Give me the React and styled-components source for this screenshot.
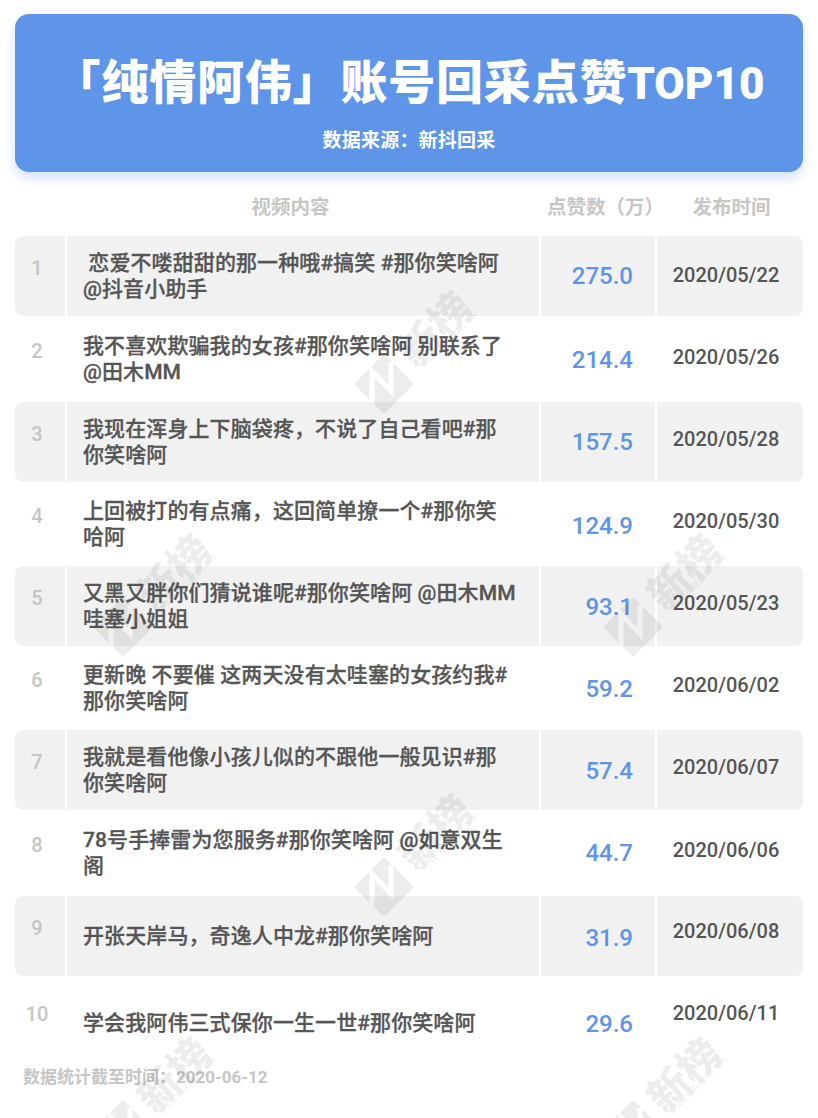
import React from "react";
import styled, { createGlobalStyle } from "styled-components";

const Global = createGlobalStyle`
  html, body { margin: 0; padding: 0; background: #fff; }
  body { font-family: "Noto Sans CJK SC", "Liberation Sans", sans-serif; }
`;
const CJK = `"Noto Sans CJK SC", sans-serif`;
const NUM = `Roboto, "Noto Sans CJK SC", sans-serif`;

const Page = styled.div`
  position: relative; width: 818px; height: 1118px; overflow: hidden;
  padding: 14px 15px 0; box-sizing: border-box; background: #fff;
`;
const Banner = styled.header`
  height: 158px; background: #5e95e8; border-radius: 14px;
  box-shadow: 0 6px 12px rgba(94,149,232,.28);
  display: flex; flex-direction: column; align-items: center; color: #fff;
`;
const Title = styled.h1`
  margin: 32px 0 0; font: 900 47px/66px ${CJK}; letter-spacing: .8px; white-space: nowrap;
`;
const TitleLatin = styled.span`
  font: 900 44px/66px ${NUM}; letter-spacing: 0;
`;
const Source = styled.div`
  margin-top: 12px; font: 700 19px/24px ${NUM}; letter-spacing: .2px;
`;
const Heads = styled.div`
  display: grid; grid-template-columns: 524px 118px 146px; height: 64px; align-items: center;
  box-sizing: border-box; padding-top: 3px; white-space: nowrap;
  color: #c6c6c4; font: 700 19.5px/28px ${CJK};
`;
const Head = styled.div`
  text-align: center;
  padding-left: ${p => p.$left || 0}px;
`;
const Row = styled.div`
  display: grid; grid-template-columns: 50px 474px 116px 148px;
  height: ${p => p.$h}px; background: ${p => p.$shade ? "#f1f1f1" : "#fff"};
  border-radius: ${p => p.$shade ? 8 : 0}px; color: #555;
`;
const Cell = styled.div`
  display: flex; align-items: center; box-sizing: border-box;
  border-left: ${p => p.$sep ? "2px solid #fff" : "0"};
`;
const Rank = styled(Cell)`
  justify-content: center; padding: 0 6px ${p => p.$lift}px 0;
  color: #c4c6c4; font: 500 20px/24px ${NUM};
`;
const Content = styled(Cell)`
  padding: ${p => p.$drop}px 0 0 16px; font: 500 21px/26px ${NUM}; letter-spacing: .1px; white-space: pre;
  -webkit-text-stroke: .3px #555;
`;
const Value = styled(Cell)`
  justify-content: flex-end; padding: ${p => p.$drop}px 22px 0 0; color: #5e95e8;
  font: 500 24px/28px ${NUM};
`;
const DateCell = styled(Cell)`
  justify-content: center; padding: 0 8px ${p => p.$lift}px 0; font: 500 20px/24px ${NUM};
`;
const Foot = styled.div`
  margin: 13px 0 0 8px; color: #c6c6c4; font: 700 17px/24px ${NUM};
`;
const Mark = styled.svg`
  position: absolute; left: ${p => p.$x}px; top: ${p => p.$y}px; width: 170px; height: 170px;
  pointer-events: none; overflow: visible;
`;

function Watermark({ x, y }) {
  const id = `n-${x}-${y}`;
  return (
    <Mark $x={x} $y={y} viewBox="0 0 170 170">
      <defs>
        <mask id={id} maskUnits="userSpaceOnUse" x="20" y="70" width="80" height="80">
          <rect x="20" y="70" width="80" height="80" fill="#fff" />
          <path d="M48 130V97l19 20V88" fill="none" stroke="#000" strokeWidth="5" />
        </mask>
      </defs>
      <g opacity=".065">
        <g mask={`url(#${id})`}>
          <path d="M60 84l26 26-26 26-26-26z" fill="#000" stroke="#000" strokeWidth="6" strokeLinejoin="round" />
        </g>
        <text transform="translate(109 53) rotate(-45)" textAnchor="middle" dominantBaseline="central" fontFamily={CJK} fontWeight="900" fontSize="42" fill="#000">新榜</text>
        <text transform="translate(106 89) rotate(-45)" fontFamily="Liberation Sans" fontSize="9.5" letterSpacing=".4" fill="#000">NEWRANK.CN</text>
      </g>
    </Mark>
  );
}

const rows = [
  { h: 80, lines: " 恋爱不喽甜甜的那一种哦#搞笑 #那你笑啥阿\n@抖音小助手", v: "275.0", d: "2020/05/22", dl: 2, vd: 0 },
  { h: 86, lines: "我不喜欢欺骗我的女孩#那你笑啥阿 别联系了\n@田木MM", v: "214.4", d: "2020/05/26", dl: 4, vd: 2 },
  { h: 80, lines: "我现在浑身上下脑袋疼，不说了自己看吧#那\n你笑啥阿", v: "157.5", d: "2020/05/28", dl: 6, vd: 0 },
  { h: 84, lines: "上回被打的有点痛，这回简单撩一个#那你笑\n哈阿", v: "124.9", d: "2020/05/30", dl: 6, vd: 4 },
  { h: 80, lines: "又黑又胖你们猜说谁呢#那你笑啥阿 @田木MM\n哇塞小姐姐", v: "93.1", d: "2020/05/23", dl: 6, vd: 2 },
  { h: 84, lines: "更新晚 不要催 这两天没有太哇塞的女孩约我#\n那你笑啥阿", v: "59.2", d: "2020/06/02", dl: 6, vd: 2 },
  { h: 80, lines: "我就是看他像小孩儿似的不跟他一般见识#那\n你笑啥阿", v: "57.4", d: "2020/06/07", dl: 6, vd: 2 },
  { h: 86, lines: "78号手捧雷为您服务#那你笑啥阿 @如意双生\n阁", v: "44.7", d: "2020/06/06", dl: 6, vd: 0 },
  { h: 80, lines: "开张天岸马，奇逸人中龙#那你笑啥阿", v: "31.9", d: "2020/06/08", dl: 10, vd: 4 },
  { h: 76, lines: "学会我阿伟三式保你一生一世#那你笑啥阿", v: "29.6", d: "2020/06/11", dl: 2, cd: 18, vd: 20, rl: 0 },
];
const marks = [[324, 274], [324, 777], [63, 517], [573, 517], [63, 1020], [573, 1020]];

export default function App() {
  return (
    <Page>
      <Global />
      <Banner>
        <Title>「纯情阿伟」账号回采点赞<TitleLatin>TOP10</TitleLatin></Title>
        <Source>数据来源：新抖回采</Source>
      </Banner>
      <Heads>
        <Head $left={27}>视频内容</Head>
        <Head $left={8}>点赞数（万）</Head>
        <Head $left={3}>发布时间</Head>
      </Heads>
      {rows.map((r, i) => (
        <Row key={i} $h={r.h} $shade={i % 2 === 0}>
          <Rank $lift={r.rl ?? 16}>{i + 1}</Rank>
          <Content $sep $drop={r.cd || 0}>{r.lines}</Content>
          <Value $sep $drop={r.vd}>{r.v}</Value>
          <DateCell $sep $lift={r.dl}>{r.d}</DateCell>
        </Row>
      ))}
      <Foot>数据统计截至时间：2020-06-12</Foot>
      {marks.map(([x, y]) => <Watermark key={x + "-" + y} x={x} y={y} />)}
    </Page>
  );
}
